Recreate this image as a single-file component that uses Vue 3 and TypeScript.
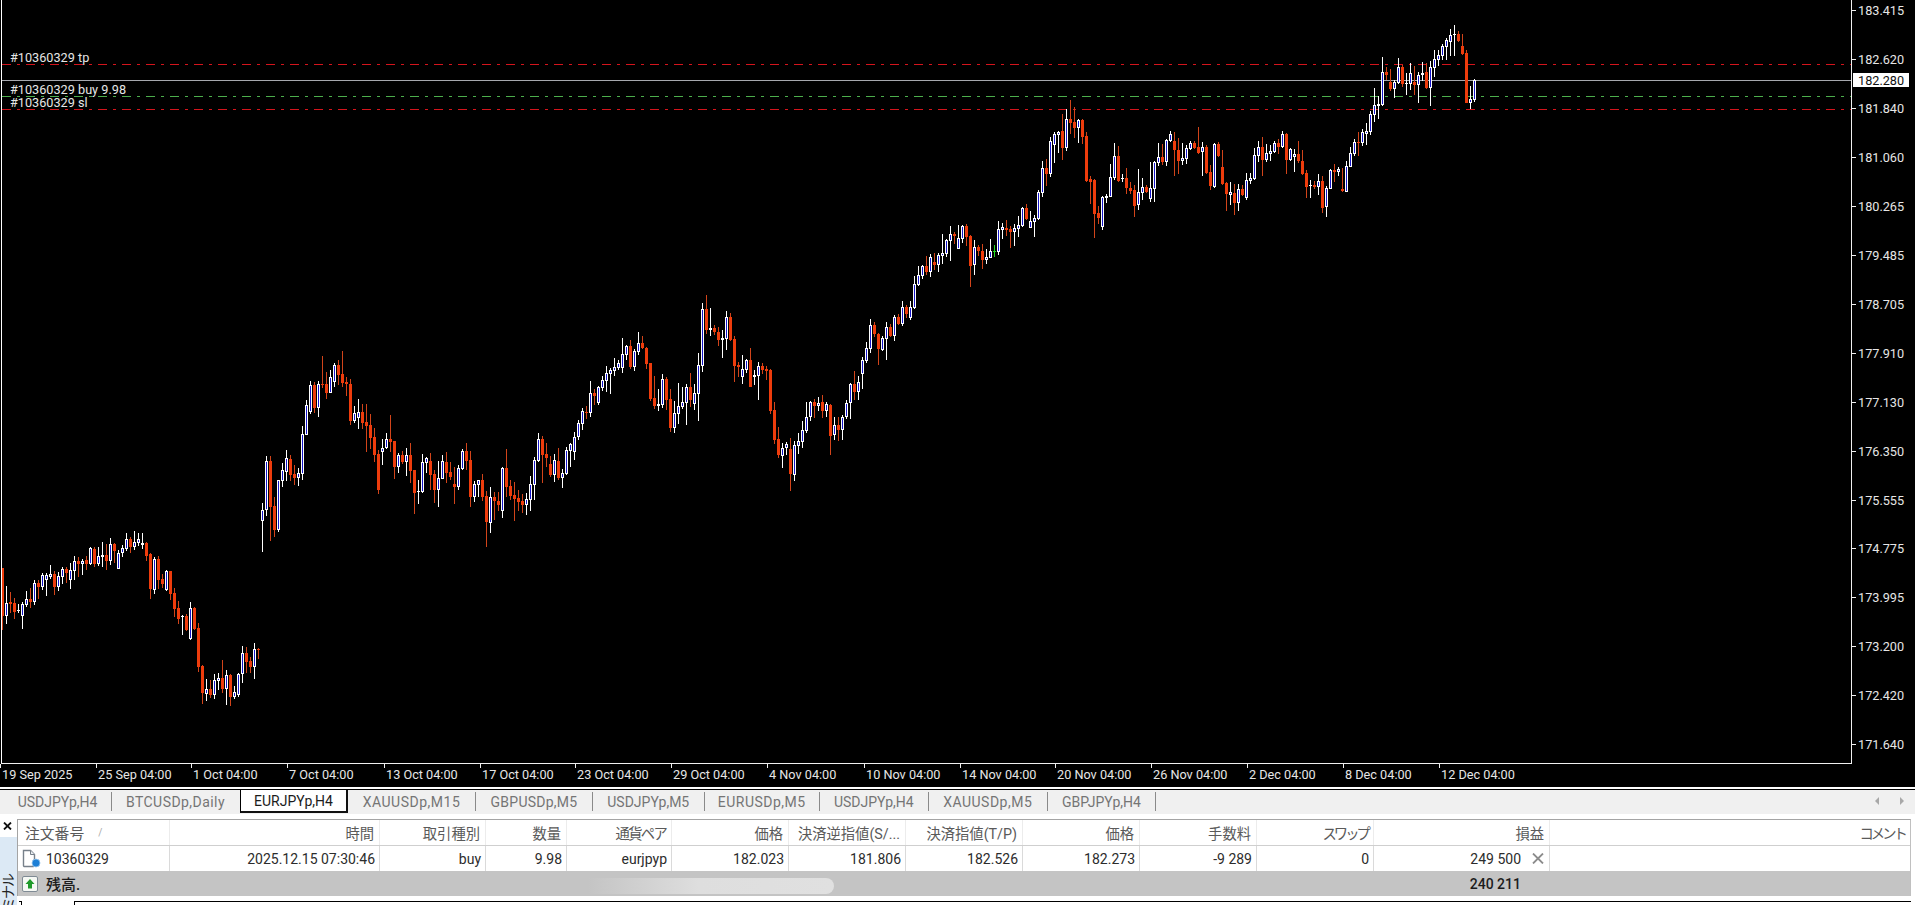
<script setup lang="ts">
interface Segment { y0: number; start: number; data: string }

const segments: Segment[] = [
  { y0: 500, start: 0, data: `d,205,348,205,390 u,310,347,258,372 d,306,312,276,340 d,309,335,295,357 u,330,333,313,340 u,313,348,305,387 u,298,315,274,322 d,296,306,265,324 u,249,305,240,316 d,249,261,240,297 u,225,261,218,270 u,225,240,218,288 u,222,230,195,237 d,222,261,212,285 u,228,261,216,274 u,208,230,201,252 d,207,219,202,249 u,211,240,190,267 u,183,212,168,240 d,183,192,172,232 u,183,192,178,225 d,180,192,168,210 u,144,192,141,195 d,146,192,142,200 u,168,192,141,197 u,166,170,126,200 d,165,183,132,210 u,132,183,114,195 d,132,153,128,190 u,160,206,150,207 u,145,160,135,171 u,118,147,99,153 d,117,140,110,160 u,126,141,94,150 u,118,129,98,138 u,130,136,99,147 d,129,167,125,183 d,162,268,160,297 u,177,270,170,283 d,177,240,168,267 d,237,252,222,264 u,213,269,210,272 d,213,282,213,300 d,280,327,265,352 d,324,357,303,373 u,348,352,345,405 d,348,390,342,392 u,325,417,306,420 d,324,388,320,390 d,385,501,370,516 d,498,579,495,612 u,568,582,537,603 d,568,585,540,595 u,541,586,522,597 u,534,542,519,570 d,534,567,480,580 u,526,567,510,615 d,525,590,522,618 u,577,590,558,597 u,522,585,518,590 u,460,521,438,549 d,460,486,440,518 d,484,500,472,519 u,448,500,430,537 d,446,448,444,477` },
  { y0: 280, start: 65, data: `u,690,722,670,815 u,544,690,528,707 d,544,680,528,782 d,678,750,652,770 u,601,750,600,755 u,571,602,549,620 u,535,575,510,603 d,537,585,525,602 d,583,594,556,615 u,580,593,565,617 u,463,581,438,600 u,376,464,360,465 u,316,396,304,402 d,316,384,306,398 u,313,383,304,410 d,313,316,228,325 d,312,339,276,356 u,292,338,270,338 u,256,305,250,320 d,256,285,240,315 d,282,308,213,320 d,307,312,292,348 d,312,423,297,434 u,400,423,378,428 u,396,414,357,446 d,396,429,372,448 d,427,438,372,516 d,435,473,402,506 d,471,525,445,545 d,522,630,510,642 u,505,515,477,555 u,477,504,460,507 d,477,486,405,517 d,483,561,483,597 u,525,560,518,578 d,525,546,513,553 u,525,546,504,587 d,525,572,489,608 d,570,639,570,702 u,633,637,600,672 u,546,636,522,640 u,534,548,530,578 d,543,585,519,630 d,582,630,570,670 u,594,630,543,680 u,543,597,525,597 d,546,579,516,610 d,576,591,545,600 d,612,621,560,672 u,564,621,555,630 u,513,566,507,570 d,513,543,489,570 d,540,651,513,682 u,612,651,603,666 u,601,614,600,650 d,600,651,582,664 d,648,726,633,801 u,651,729,621,759 d,651,663,636,720 d,663,675,636,692 u,564,693,561,714 d,564,621,507,650 d,618,648,600,660 d,645,657,606,723 d,654,666,630,694 d,663,675,642,700 u,657,675,640,705 u,612,660,588,693 u,541,614,530,660 u,477,543,460,546 d,477,525,468,608 d,522,534,490,560 d,552,585,528,590 u,540,585,522,606 d,543,594,504,600 u,579,594,567,624 u,510,582,502,585 u,492,513,490,560 u,471,516,456,540 u,430,471,420,480 u,393,431,384,450 d,396,399,378,417 u,339,399,303,410 d,339,348,327,375 u,321,369,318,375 u,300,324,288,333 u,280,303,258,336 u,270,282,265,342 u,261,273,235,288 u,249,264,240,270 u,222,264,174,278 u,198,225,195,240 d,198,261,180,268 u,213,261,207,273 u,189,216,156,225 d,189,204,168,207 d,204,252,200,267 d,249,357,249,363 d,354,378,288,387 u,372,378,327,393 u,297,375,282,384 d,297,360,292,390 d,357,444,327,456 u,399,444,363,459 u,378,402,309,432 u,366,381,320,387 u,321,369,312,435 d,321,360,279,381 u,339,372,312,390 u,255,342,220,423 u,87,258,68,276 d,87,150,45,162 u,144,150,84,168 d,144,156,135,165 d,156,180,142,198 u,174,180,150,234 u,111,177,93,210 d,111,180,99,182 d,177,258,168,306 d,255,261,246,290 u,267,291,225,312 u,240,270,237,280` },
  { y0: 100, start: 187, data: `d,780,860,745,862 u,826,832,810,855 u,798,828,785,900 d,798,810,790,822 d,807,812,798,840 d,810,934,808,942 d,931,1020,906,1032 d,1017,1065,981,1074 u,1044,1068,1029,1104 u,1032,1044,1026,1065 d,1047,1122,1014,1173 u,1035,1125,1023,1143 u,1023,1038,999,1062 u,990,1026,963,1044 u,952,993,905,999 u,906,951,903,963 d,906,918,897,954 u,908,918,890,932 d,907,933,885,955 u,912,933,906,950 d,915,1008,912,1065 u,975,1005,950,1020 d,975,990,950,1022 u,951,990,945,1020 u,909,951,900,958 u,852,909,850,957 d,852,876,813,900 u,846,876,828,900 u,780,822,772,866 u,745,783,726,790 u,675,747,657,760 d,675,702,665,710 d,702,747,700,795 u,714,750,708,754 u,681,717,666,780 d,681,708,672,712 u,651,708,645,722 d,651,672,642,675 u,622,672,603,678 d,622,642,615,655 u,622,654,603,660 u,552,624,528,627 u,526,555,498,558 u,498,528,495,536 d,498,516,468,525 u,471,516,462,531 d,486,495,459,510 u,465,495,458,516 u,460,467,402,492 u,420,462,417,472 u,402,423,378,483 d,402,408,396,432 u,414,447,375,447 u,378,417,376,430 d,378,411,372,438 d,408,498,405,561 u,441,495,420,525 d,441,453,435,468 d,453,480,432,507 u,471,480,447,492 u,453,474,417,474 g,453,456,435,471 u,387,456,363,465 u,381,390,369,417 d,384,390,360,408 d,387,396,378,444 u,384,396,372,438 u,375,387,348,411 u,324,378,320,380 d,324,357,312,360 u,363,384,333,384 u,354,366,345,411 u,276,357,270,360 u,204,279,183,291 d,204,222,177,258 u,123,222,111,231 u,102,135,96,189 u,95,105,93,159 d,93,144,42,180 u,57,144,27,153 d,57,69,0,102 d,66,84,21,114 u,60,84,57,129 d,60,111,57,132 d,108,243,96,246 d,237,246,228,312 d,240,342,237,414 d,339,354,318,372 u,291,381,288,390 u,288,294,282,309 u,231,291,192,292 u,168,234,129,240 d,168,243,138,246 u,234,238,222,246 d,234,264,204,282 d,264,273,246,282 d,270,318,255,351 u,277,315,207,330 u,261,280,234,300 d,261,276,255,280 u,264,297,186,306 u,186,267,183,306 u,171,189,129,198 d,171,186,132,195 u,120,186,117,198 u,102,123,93,126 d,123,150,96,228 d,150,183,114,222 u,174,183,129,195 u,144,177,135,192 u,129,147,123,150 d,129,144,123,147 d,141,159,81,162 u,141,156,126,228 d,141,219,135,222 d,216,258,195,270 u,132,261,130,264 d,132,168,126,171 d,201,252,150,255 d,249,282,246,333 u,276,285,246,315 d,279,309,252,345 u,267,309,252,333 d,267,285,255,288 u,240,294,219,300` },
  { y0: 50, start: 312, data: `u,384,393,369,402 u,315,387,294,390 u,291,318,273,336 d,291,330,261,378 u,309,330,282,336 u,304,312,285,333 u,279,306,273,309 d,279,291,267,312 u,252,291,243,294 d,252,330,249,372 u,297,330,294,332 u,312,320,297,366 d,312,333,273,339 d,333,372,300,375 d,369,411,360,444 u,405,409,390,444 d,405,411,393,417 u,393,411,372,435 d,393,474,378,489 u,414,471,408,501 u,360,417,357,418 d,360,366,342,396 u,358,366,350,378 d,417,423,354,426 u,348,426,333,426 u,309,351,291,352 u,276,312,267,318 d,276,279,246,318 u,246,279,237,288 u,243,252,219,285 u,192,246,183,255 u,165,195,114,216 u,162,168,138,207 u,66,165,21,168 d,66,75,51,90 d,96,117,57,123 u,96,117,90,144 u,51,99,24,102 d,51,102,45,111 u,98,101,69,135 u,69,102,39,120 d,96,105,48,135 u,75,105,66,159 u,69,75,36,93 d,66,114,39,117 u,51,114,33,168 u,27,54,0,81 u,15,30,0,48` },
  { y0: 20, start: 360, data: `u,78,108,72,120 u,60,81,54,120 u,45,66,27,108 u,42,46,15,108 d,42,63,33,66 d,78,102,42,105 d,99,249,90,250 u,237,249,198,267 u,180,241,177,246` },
]

const rect = (x: number, y: number, w: number, h: number): string => `M${x} ${y}h${w}v${h}h${-w}z`

let white = ''
let blue = ''
let redBody = ''
let redWick = ''
let green = ''

for (const seg of segments) {
  seg.data.trim().split(/\s+/).forEach((token, k) => {
    const parts = token.split(',')
    const kind = parts[0]
    const [bt, bb, wt, wb] = parts.slice(1).map((v) => Math.round(seg.y0 + Number(v) / 3))
    const x = 2 + 4 * (seg.start + k)
    const bh = Math.max(bb - bt, 1)
    const wick = rect(x, wt, 1, Math.max(wb - wt, 1))
    const body = rect(x - 1, bt, 3, bh)
    if (kind === 'd') {
      redWick += wick
      redBody += body
    } else if (kind === 'g') {
      green += wick + rect(x - 1, bt, 3, 1)
    } else {
      white += wick + body
      if (bh > 2) blue += rect(x, bt + 1, 1, bh - 2)
    }
  })
}

const prices = ['183.415', '182.620', '181.840', '181.060', '180.265', '179.485', '178.705', '177.910', '177.130', '176.350', '175.555', '174.775', '173.995', '173.200', '172.420', '171.640']
  .map((label, i) => ({ label, y: Math.round(10 + i * 48.95) }))

const times = [
  { label: '19 Sep 2025', x: 2 }, { label: '25 Sep 04:00', x: 98 }, { label: '1 Oct 04:00', x: 193 },
  { label: '7 Oct 04:00', x: 289 }, { label: '13 Oct 04:00', x: 386 }, { label: '17 Oct 04:00', x: 482 },
  { label: '23 Oct 04:00', x: 577 }, { label: '29 Oct 04:00', x: 673 }, { label: '4 Nov 04:00', x: 769 },
  { label: '10 Nov 04:00', x: 866 }, { label: '14 Nov 04:00', x: 962 }, { label: '20 Nov 04:00', x: 1057 },
  { label: '26 Nov 04:00', x: 1153 }, { label: '2 Dec 04:00', x: 1249 }, { label: '8 Dec 04:00', x: 1345 },
  { label: '12 Dec 04:00', x: 1441 },
]

const tabs = [
  { label: 'USDJPYp,H4', w: 108, ls: 0 }, { label: 'BTCUSDp,Daily', w: 128, ls: 0.45 },
  { label: 'EURJPYp,H4', w: 108, ls: 0, active: true }, { label: 'XAUUSDp,M15', w: 128, ls: 0.5 },
  { label: 'GBPUSDp,M5', w: 117, ls: 0.25 }, { label: 'USDJPYp,M5', w: 111.5, ls: 0 },
  { label: 'EURUSDp,M5', w: 115.5, ls: 0.5 }, { label: 'USDJPYp,H4', w: 108.5, ls: 0 },
  { label: 'XAUUSDp,M5', w: 119.5, ls: 0.5 }, { label: 'GBPJPYp,H4', w: 108, ls: 0 },
]

const headers = [
  { label: '時間', ls: 0 }, { label: '取引種別', ls: 0 }, { label: '数量', ls: 0 }, { label: '通貨ペア', ls: -1.7 },
  { label: '価格', ls: 0 }, { label: '決済逆指値(S/...', ls: 0 }, { label: '決済指値(T/P)', ls: 0 }, { label: '価格', ls: 0 },
  { label: '手数料', ls: 0 }, { label: 'スワップ', ls: -2.9 }, { label: '損益', ls: 0 }, { label: 'コメント', ls: -2.9 },
]
const cells = ['2025.12.15 07:30:46', 'buy', '9.98', 'eurjpyp', '182.023', '181.806', '182.526', '182.273', '-9 289', '0']
</script>

<template>
  <div class="root">
    <svg class="chart" width="1915" height="787" viewBox="0 0 1915 787">
      <rect width="1915" height="787" fill="#000" />
      <g fill="none" stroke-width="1" shape-rendering="crispEdges">
        <path d="M2 64.5H1851" stroke="#d4141c" stroke-dasharray="9 6 3 6" />
        <path d="M2 80.5H1851" stroke="#a6a8ae" />
        <path d="M2 96.5H1851" stroke="#4cae4c" stroke-dasharray="9 6 3 6" />
        <path d="M2 109.5H1851" stroke="#d4141c" stroke-dasharray="9 6 3 6" />
      </g>
      <g shape-rendering="crispEdges">
        <path :d="redWick" fill="#d2441a" />
        <path :d="redBody" fill="#ee3c0c" />
        <path :d="green" fill="#22d822" />
        <path :d="white" fill="#fff" />
        <path :d="blue" fill="#1414c8" />
        <path d="M1 0h1v764h-1z" fill="#fff" />
        <path d="M1 763h1851v1H1zM1851 0h1v764h-1z" fill="#f0f0f0" />
        <path v-for="p in prices" :key="p.label" :d="`M1852 ${p.y}h4v1h-4z`" fill="#f0f0f0" />
        <path v-for="t in times" :key="t.label" :d="`M${t.x - 2} 764h1v4h-1z`" fill="#f0f0f0" />
      </g>
      <g class="chart-text">
        <text x="10" y="62">#10360329 tp</text>
        <text x="10" y="94">#10360329 buy 9.98</text>
        <text x="10" y="107">#10360329 sl</text>
        <text v-for="p in prices" :key="p.label" x="1858" :y="p.y + 5">{{ p.label }}</text>
        <text v-for="t in times" :key="t.label" :x="t.x" y="779">{{ t.label }}</text>
      </g>
      <rect x="1853" y="73" width="56" height="14" fill="#fff" />
      <text class="tag" x="1858" y="85">182.280</text>
    </svg>

    <div class="tabstrip">
      <div
        v-for="(tab, i) in tabs"
        :key="tab.label + i"
        class="tab"
        :class="{ active: tab.active, plain: tabs[i + 1]?.active }"
        :style="{ width: tab.w + 'px', letterSpacing: tab.ls + 'px' }"
      >{{ tab.label }}</div>
      <div class="arrows">
        <svg width="4" height="8" viewBox="0 0 4 8"><path d="M4 0v8L0 4z" fill="#a8a8a8" /></svg>
        <svg width="4" height="8" viewBox="0 0 4 8"><path d="M0 0v8l4-4z" fill="#a8a8a8" /></svg>
      </div>
    </div>

    <div class="bottom">
      <aside class="side">
        <div class="side-top">
          <svg width="9" height="8" viewBox="0 0 9 8"><path d="M1 0.5l7 7M8 0.5l-7 7" stroke="#111" stroke-width="1.8" fill="none" /></svg>
        </div>
        <div class="side-tab"><span class="side-label">ターミナル</span></div>
      </aside>

      <main class="panel">
        <div class="table">
          <div class="row head">
            <div class="cell first"><span class="order">注文番号</span><span class="sort">/</span></div>
            <div v-for="(h, i) in headers" :key="i" class="cell" :style="{ letterSpacing: h.ls + 'px' }">{{ h.label }}</div>
          </div>
          <div class="row data">
            <div class="cell first">
              <svg class="doc" width="20" height="19" viewBox="0 0 20 19">
                <path d="M2.5 1.5h7l4 4v11a1 1 0 0 1-1 1h-9a1 1 0 0 1-1-1z" fill="#fff" stroke="#77808a" stroke-width="1.4" />
                <path d="M9.5 1.5v4h4" fill="#e8ecf0" stroke="#77808a" />
                <circle cx="15" cy="14" r="4" fill="#1c7fd6" stroke="#9cc8ee" stroke-width="0.8" />
              </svg>
              10360329
            </div>
            <div v-for="(c, i) in cells" :key="i" class="cell">{{ c }}</div>
            <div class="cell profit">
              249 500
              <svg class="close" width="12" height="11" viewBox="0 0 12 11"><path d="M1 0.5l10 10M11 0.5l-10 10" stroke="#8c8c8c" stroke-width="1.8" fill="none" /></svg>
            </div>
            <div class="cell"></div>
          </div>
          <div class="row summary">
            <div class="cell first">
              <svg class="up" width="16" height="16" viewBox="0 0 16 16">
                <rect x="0.5" y="0.5" width="15" height="15" rx="1.5" fill="#f6f8f4" stroke="#7f8a94" />
                <path d="M8 3l4.5 5H10v4.5H6V8H3.5z" fill="#1f9a2a" />
              </svg>
              <span class="balance">残高.</span>
            </div>
            <div class="total">240 211</div>
          </div>
          <div class="smudge"></div>
        </div>
        <div class="next">
          <div class="tick"></div>
          <div class="next-window"></div>
        </div>
      </main>
    </div>
  </div>
</template>

<style>
html, body { margin: 0; background: #fff; }
</style>

<style scoped>
.root {
  width: 1915px;
  height: 905px;
  overflow: hidden;
  display: flex;
  flex-direction: column;
  background: #fff;
  font-family: Roboto, "Noto Sans CJK JP", sans-serif;
  font-size: 14px;
}
.chart { display: block; flex: none; margin-bottom: 2px; }
.chart-text text { font-family: Roboto, sans-serif; font-size: 12.7px; fill: #e6e6e6; }
.tag { font-family: Roboto, sans-serif; font-size: 12.7px; fill: #111; }

.tabstrip {
  flex: none;
  height: 24px;
  box-sizing: content-box;
  border-top: 1px solid #000;
  background: #f0f0f0;
  padding-left: 4px;
  display: flex;
  align-items: flex-start;
}
.tab {
  box-sizing: border-box;
  height: 19px;
  margin-top: 2px;
  border-right: 1px solid #8a8a8a;
  color: #757575;
  display: flex;
  align-items: center;
  justify-content: center;
  white-space: nowrap;
  flex: none;
}
.tab.plain { border-right-color: transparent; }
.tab.active {
  height: 23px;
  margin-top: 0;
  background: #fff;
  border-left: 1px solid #000;
  border-right: 2px solid #111;
  border-bottom: 2px solid #111;
  color: #1c1c1c;
}
.arrows {
  margin-left: auto;
  margin-top: 7px;
  padding-right: 11px;
  display: flex;
  gap: 21px;
}
.arrows svg { display: block; }

.bottom { flex: 1; display: flex; min-height: 0; }
.side { flex: none; width: 17px; display: flex; flex-direction: column; }
.side-top { height: 23px; padding: 8px 0 0 3px; box-sizing: border-box; }
.side-top svg { display: block; }
.side-tab {
  flex: 1;
  background: #dce9f5;
  overflow: hidden;
  padding-top: 38px;
}
.side-label {
  display: block;
  writing-mode: vertical-rl;
  text-orientation: sideways;
  transform: rotate(180deg);
  font-size: 14px;
  letter-spacing: -2px;
  line-height: 17px;
  color: #222;
  white-space: nowrap;
}

.panel { flex: 1; min-width: 0; display: flex; flex-direction: column; padding: 5px 4px 0 0; }
.table {
  position: relative;
  flex: none;
  border-top: 1px solid #a4a4a4;
  border-left: 1px solid #a4a4a4;
  border-right: 1px solid #c0c0c0;
}
.row {
  display: grid;
  grid-template-columns: 152px 210px 106px 81px 105px 117px 117px 117px 117px 117px 117px 176px 1fr;
}
.cell {
  display: flex;
  align-items: center;
  justify-content: flex-end;
  box-sizing: border-box;
  padding-right: 5px;
  white-space: nowrap;
  min-width: 0;
}
.cell.first { justify-content: flex-start; }
.head { height: 26px; color: #5a5a5a; border-bottom: 1px solid #cfcfcf; box-sizing: border-box; font-size: 14.3px; }
.head .cell { border-right: 1px solid #ececec; padding-right: 5px; }
.head .cell:last-child { border-right: 0; }
.head .first { padding-left: 7px; }
.order { font-size: 14.8px; }
.sort { margin-left: 14px; color: #a8a8a8; font-size: 10px; }
.data { height: 25px; color: #2c2c2c; }
.data .cell { border-right: 1px solid #dadada; padding-right: 4px; }
.data .cell:last-child { border-right: 0; }
.data .first { padding-left: 3px; }
.doc { margin-right: 5px; flex: none; }
.profit.cell { padding-right: 5px; }
.close { margin-left: 11px; flex: none; }
.summary {
  height: 25px;
  background: #c4c4c4;
  color: #1c1c1c;
  font-weight: 500;
}
.summary .first { padding-left: 4px; }
.up { margin-right: 8px; flex: none; }
.balance { font-size: 15px; }
.total {
  grid-column: 12;
  display: flex;
  align-items: center;
  justify-content: flex-end;
  padding-right: 29px;
}
.smudge {
  position: absolute;
  left: 570px;
  top: 58px;
  width: 246px;
  height: 16px;
  border-radius: 0 8px 8px 0;
  background: linear-gradient(90deg, rgba(224, 224, 224, 0), #dedede 45%, #e0e0e0);
}
.next { flex: 1; display: flex; margin-top: 5px; }
.tick {
  width: 2px;
  margin-left: 2px;
  border-top: 1px solid #000;
  border-right: 1px solid #000;
}
.next-window {
  flex: 1;
  margin-left: 52px;
  border-top: 1px solid #000;
  border-left: 1px solid #000;
}
</style>
